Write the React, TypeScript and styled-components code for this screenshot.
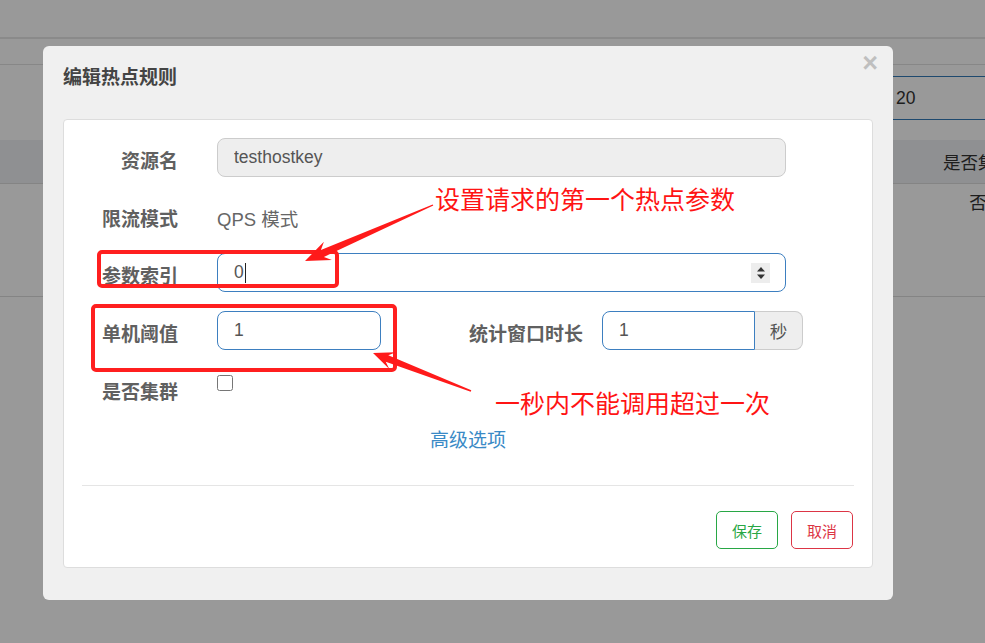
import React from "react";
import styled, { createGlobalStyle } from "styled-components";

const GlobalStyle = createGlobalStyle`
  html, body {
    margin: 0;
    padding: 0;
    width: 985px;
    height: 643px;
    overflow: hidden;
    background: #fff;
  }
  body {
    font-family: "Liberation Sans", Arial, "Noto Sans CJK SC", sans-serif;
    font-size: 17.5px;
    color: #333;
  }
`;

const CJK = `"Liberation Sans", Arial, "Noto Sans CJK SC", sans-serif`;

const Screen = styled.div`
  position: relative;
  width: 985px;
  height: 643px;
  overflow: hidden;
`;

/* ---------- page behind the dialog ---------- */
const Page = styled.div`
  width: 985px;
  height: 643px;
  background: #fff;
  display: flex;
  flex-direction: column;
`;

const TitleBar = styled.div`
  height: 37px;
  overflow: hidden;
  border-bottom: 2px solid #e6e6e6;
  padding-left: 10px;
`;

const PageTitle = styled.h1`
  margin: -26px 0 0;
  font-size: 30px;
  line-height: 30px;
  font-weight: 700;
  color: #333;
  letter-spacing: 0.5px;
`;

const NavBand = styled.div`
  height: 25px;
  border-bottom: 1px solid #e2e2e2;
`;

const Toolbar = styled.div`
  height: 75px;
  display: flex;
  justify-content: flex-end;
  align-items: flex-start;
`;

const SelectBox = styled.div`
  box-sizing: border-box;
  margin-top: 11px;
  margin-right: -15px;
  width: 140px;
  height: 44px;
  border: 1px solid #337ab7;
  border-radius: 4px;
  display: flex;
  align-items: center;
  justify-content: space-between;
  padding: 0 4px 0 35px;
  font-size: 17.5px;
  color: #333;
`;

const SelectCaret = styled.span`
  font-size: 10px;
  color: #333;
`;

const Table = styled.div`
  width: 1030px;
  display: grid;
  grid-template-columns: 1fr 104px;
`;

const HeadCell = styled.div`
  height: 43px;
  background: #eff1f4;
  border-bottom: 1px solid #dcdcdc;
  display: flex;
  align-items: center;
  justify-content: center;
  font-size: 17.5px;
  color: #333;
  white-space: nowrap;
`;

const BodyCell = styled.div`
  height: 113px;
  box-sizing: border-box;
  padding-top: 7px;
  line-height: 24px;
  text-align: center;
  border-bottom: 1px solid #dcdcdc;
  font-size: 17.5px;
  color: #333;
`;

const Backdrop = styled.div`
  position: absolute;
  inset: 0;
  background: rgba(0, 0, 0, 0.4);
`;

/* ---------- dialog ---------- */
const Modal = styled.div`
  position: absolute;
  left: 43px;
  top: 46px;
  width: 850px;
  box-sizing: border-box;
  padding: 18px 20px 32px;
  background: #f0f0f0;
  border-radius: 6px;
`;

const ModalTitle = styled.h4`
  margin: 0 0 28px;
  font-family: ${CJK};
  font-size: 19px;
  line-height: 27px;
  font-weight: 700;
  color: #444;
`;

const CloseButton = styled.button`
  position: absolute;
  top: 4px;
  right: 15px;
  padding: 0;
  border: 0;
  background: none;
  font-family: "Liberation Sans", Arial, sans-serif;
  font-size: 27px;
  line-height: 27px;
  font-weight: 700;
  color: #000;
  opacity: 0.2;
`;

const Panel = styled.div`
  background: #fff;
  border: 1px solid #ddd;
  border-radius: 4px;
  padding: 18px;
`;

const Row = styled.div<{ $h?: number }>`
  display: grid;
  grid-template-columns: 96px 569px;
  column-gap: 39px;
  align-items: start;
  min-height: ${(p) => p.$h ?? 39}px;
  margin-bottom: 19px;
`;

const Label = styled.label<{ $w?: number }>`
  ${(p) => (p.$w ? `width: ${p.$w}px; flex: none;` : "")}
  text-align: right;
  padding-top: 10px;
  font-family: ${CJK};
  font-size: 19px;
  line-height: 27px;
  font-weight: 700;
  color: #606060;
  white-space: nowrap;
`;

const StaticText = styled.div`
  padding-top: 10px;
  font-size: 18.5px;
  line-height: 27px;
  color: #666;
`;

const TextInput = styled.input<{ $w?: number; $blue?: boolean; $locked?: boolean; $join?: boolean }>`
  box-sizing: border-box;
  height: 39px;
  width: ${(p) => (p.$w ? `${p.$w}px` : "100%")};
  flex: none;
  margin: 0;
  padding: 0 16px;
  font-family: "Liberation Sans", Arial, sans-serif;
  font-size: 17.5px;
  color: #555;
  border: 1px solid ${(p) => (p.$blue ? "#3d7fc0" : "#ccc")};
  border-radius: ${(p) => (p.$join ? "8px 0 0 8px" : "8px")};
  background: ${(p) => (p.$locked ? "#eee" : "#fff")};
  outline: none;
`;

const NumberShell = styled.div`
  box-sizing: border-box;
  height: 39px;
  width: 100%;
  display: flex;
  align-items: center;
  padding: 0 15px 0 16px;
  border: 1px solid #3d7fc0;
  border-radius: 8px;
  background: #fff;
  font-size: 17.5px;
  color: #555;
`;

const TextCaret = styled.span`
  width: 1px;
  height: 20px;
  background: #222;
  margin-left: 1px;
`;

const Grow = styled.span`
  flex: 1;
`;

const Spinner = styled.span`
  width: 19px;
  height: 20px;
  background: #ededed;
  display: flex;
  align-items: center;
  justify-content: center;
`;

const InlineGroup = styled.div`
  display: flex;
  align-items: flex-start;
`;

const InputGroup = styled.div`
  display: flex;
  margin-left: 19px;
`;

const Addon = styled.span`
  box-sizing: border-box;
  width: 48px;
  height: 39px;
  display: flex;
  align-items: center;
  justify-content: center;
  background: #eee;
  border: 1px solid #ccc;
  border-left: 0;
  border-radius: 0 8px 8px 0;
  font-family: ${CJK};
  font-size: 17.5px;
  color: #555;
`;

const Checkbox = styled.input`
  width: 16px;
  height: 16px;
  margin: 6px 0 0;
`;

const LinkRow = styled.div`
  text-align: center;
  line-height: 27px;
`;

const AdvancedLink = styled.a`
  font-family: ${CJK};
  font-size: 19px;
  color: #3a8ac6;
  text-decoration: none;
`;

const Divider = styled.div`
  height: 1px;
  background: #e5e5e5;
  margin-top: 30px;
`;

const Footer = styled.div`
  display: flex;
  justify-content: flex-end;
  gap: 13px;
  margin-top: 25px;
  padding-right: 1px;
`;

const OutlineButton = styled.button<{ $tone: string }>`
  box-sizing: border-box;
  width: 62px;
  height: 38px;
  padding: 0;
  border: 1px solid ${(p) => p.$tone};
  border-radius: 5px;
  background: #fff;
  color: ${(p) => p.$tone};
  font-family: ${CJK};
  font-size: 15px;
`;

/* ---------- annotations drawn over the screenshot ---------- */
const AnnotationLayer = styled.div`
  position: absolute;
  inset: 0;
  pointer-events: none;
`;

const RedBox = styled.div<{ $x: number; $y: number; $w: number; $h: number }>`
  position: absolute;
  left: ${(p) => p.$x}px;
  top: ${(p) => p.$y}px;
  width: ${(p) => p.$w}px;
  height: ${(p) => p.$h}px;
  box-sizing: border-box;
  border: 4px solid #ff1f1f;
  border-radius: 5px;
`;

const RedNote = styled.div<{ $x: number; $y: number }>`
  position: absolute;
  left: ${(p) => p.$x}px;
  top: ${(p) => p.$y}px;
  font-family: "Noto Sans CJK SC", sans-serif;
  font-size: 25px;
  line-height: 25px;
  color: #ff1414;
  white-space: nowrap;
`;

const ArrowCanvas = styled.svg`
  position: absolute;
  left: 0;
  top: 0;
`;

type Arrow = { tail: [number, number]; tip: [number, number]; head: number; headW: number; neckW: number };

function arrowPoints(a: Arrow): string {
  const [tx, ty] = a.tail;
  const [px, py] = a.tip;
  const dx = px - tx;
  const dy = py - ty;
  const len = Math.hypot(dx, dy);
  const ux = dx / len;
  const uy = dy / len;
  const nx = -uy;
  const ny = ux;
  const neck = [px - ux * (a.head - 6), py - uy * (a.head - 6)];
  const barb = [px - ux * a.head, py - uy * a.head];
  const tailW = 0.7;
  const pts = [
    [tx + nx * tailW, ty + ny * tailW],
    [neck[0] + nx * a.neckW, neck[1] + ny * a.neckW],
    [barb[0] + nx * a.headW, barb[1] + ny * a.headW],
    [px, py],
    [barb[0] - nx * a.headW, barb[1] - ny * a.headW],
    [neck[0] - nx * a.neckW, neck[1] - ny * a.neckW],
    [tx - nx * tailW, ty - ny * tailW],
  ];
  return pts.map((p) => `${p[0].toFixed(1)},${p[1].toFixed(1)}`).join(" ");
}

const arrows: Arrow[] = [
  { tail: [433, 205], tip: [305, 261], head: 25, headW: 10, neckW: 3.8 },
  { tail: [471, 391], tip: [373, 353], head: 21, headW: 9, neckW: 3.5 },
];

export default function App() {
  return (
    <>
      <GlobalStyle />
      <Screen>
        <Page>
          <TitleBar>
            <PageTitle>Sentinel Service</PageTitle>
          </TitleBar>
          <NavBand />
          <Toolbar>
            <SelectBox>
              <span>20</span>
              <SelectCaret>▼</SelectCaret>
            </SelectBox>
          </Toolbar>
          <Table>
            <HeadCell />
            <HeadCell>是否集群</HeadCell>
            <BodyCell />
            <BodyCell>否</BodyCell>
          </Table>
        </Page>

        <Backdrop />

        <Modal>
          <ModalTitle>编辑热点规则</ModalTitle>
          <CloseButton>×</CloseButton>
          <Panel>
            <Row>
              <Label>资源名</Label>
              <TextInput $locked readOnly value="testhostkey" />
            </Row>
            <Row $h={38}>
              <Label>限流模式</Label>
              <StaticText>QPS 模式</StaticText>
            </Row>
            <Row>
              <Label>参数索引</Label>
              <NumberShell>
                <span>0</span>
                <TextCaret />
                <Grow />
                <Spinner>
                  <svg width="10" height="16" viewBox="0 0 10 16">
                    <path d="M5 2 L9 6.5 H1 Z" fill="#333" />
                    <path d="M1 9.5 H9 L5 14 Z" fill="#333" />
                  </svg>
                </Spinner>
              </NumberShell>
            </Row>
            <Row>
              <Label>单机阈值</Label>
              <InlineGroup>
                <TextInput $w={164} $blue readOnly value="1" />
                <Label $w={202}>统计窗口时长</Label>
                <InputGroup>
                  <TextInput $w={153} $blue $join readOnly value="1" />
                  <Addon>秒</Addon>
                </InputGroup>
              </InlineGroup>
            </Row>
            <Row>
              <Label>是否集群</Label>
              <div>
                <Checkbox type="checkbox" />
              </div>
            </Row>
            <LinkRow>
              <AdvancedLink href="#">高级选项</AdvancedLink>
            </LinkRow>
            <Divider />
            <Footer>
              <OutlineButton $tone="#28a745">保存</OutlineButton>
              <OutlineButton $tone="#dc3545">取消</OutlineButton>
            </Footer>
          </Panel>
        </Modal>

        <AnnotationLayer>
          <RedBox $x={97} $y={250} $w={242} $h={38} />
          <RedBox $x={91} $y={304} $w={306} $h={68} />
          <RedNote $x={435} $y={186}>设置请求的第一个热点参数</RedNote>
          <RedNote $x={495} $y={390}>一秒内不能调用超过一次</RedNote>
          <ArrowCanvas width={985} height={643} viewBox="0 0 985 643">
            {arrows.map((a, i) => (
              <polygon key={i} points={arrowPoints(a)} fill="#ff1a1a" strokeLinejoin="round" />
            ))}
          </ArrowCanvas>
        </AnnotationLayer>
      </Screen>
    </>
  );
}
